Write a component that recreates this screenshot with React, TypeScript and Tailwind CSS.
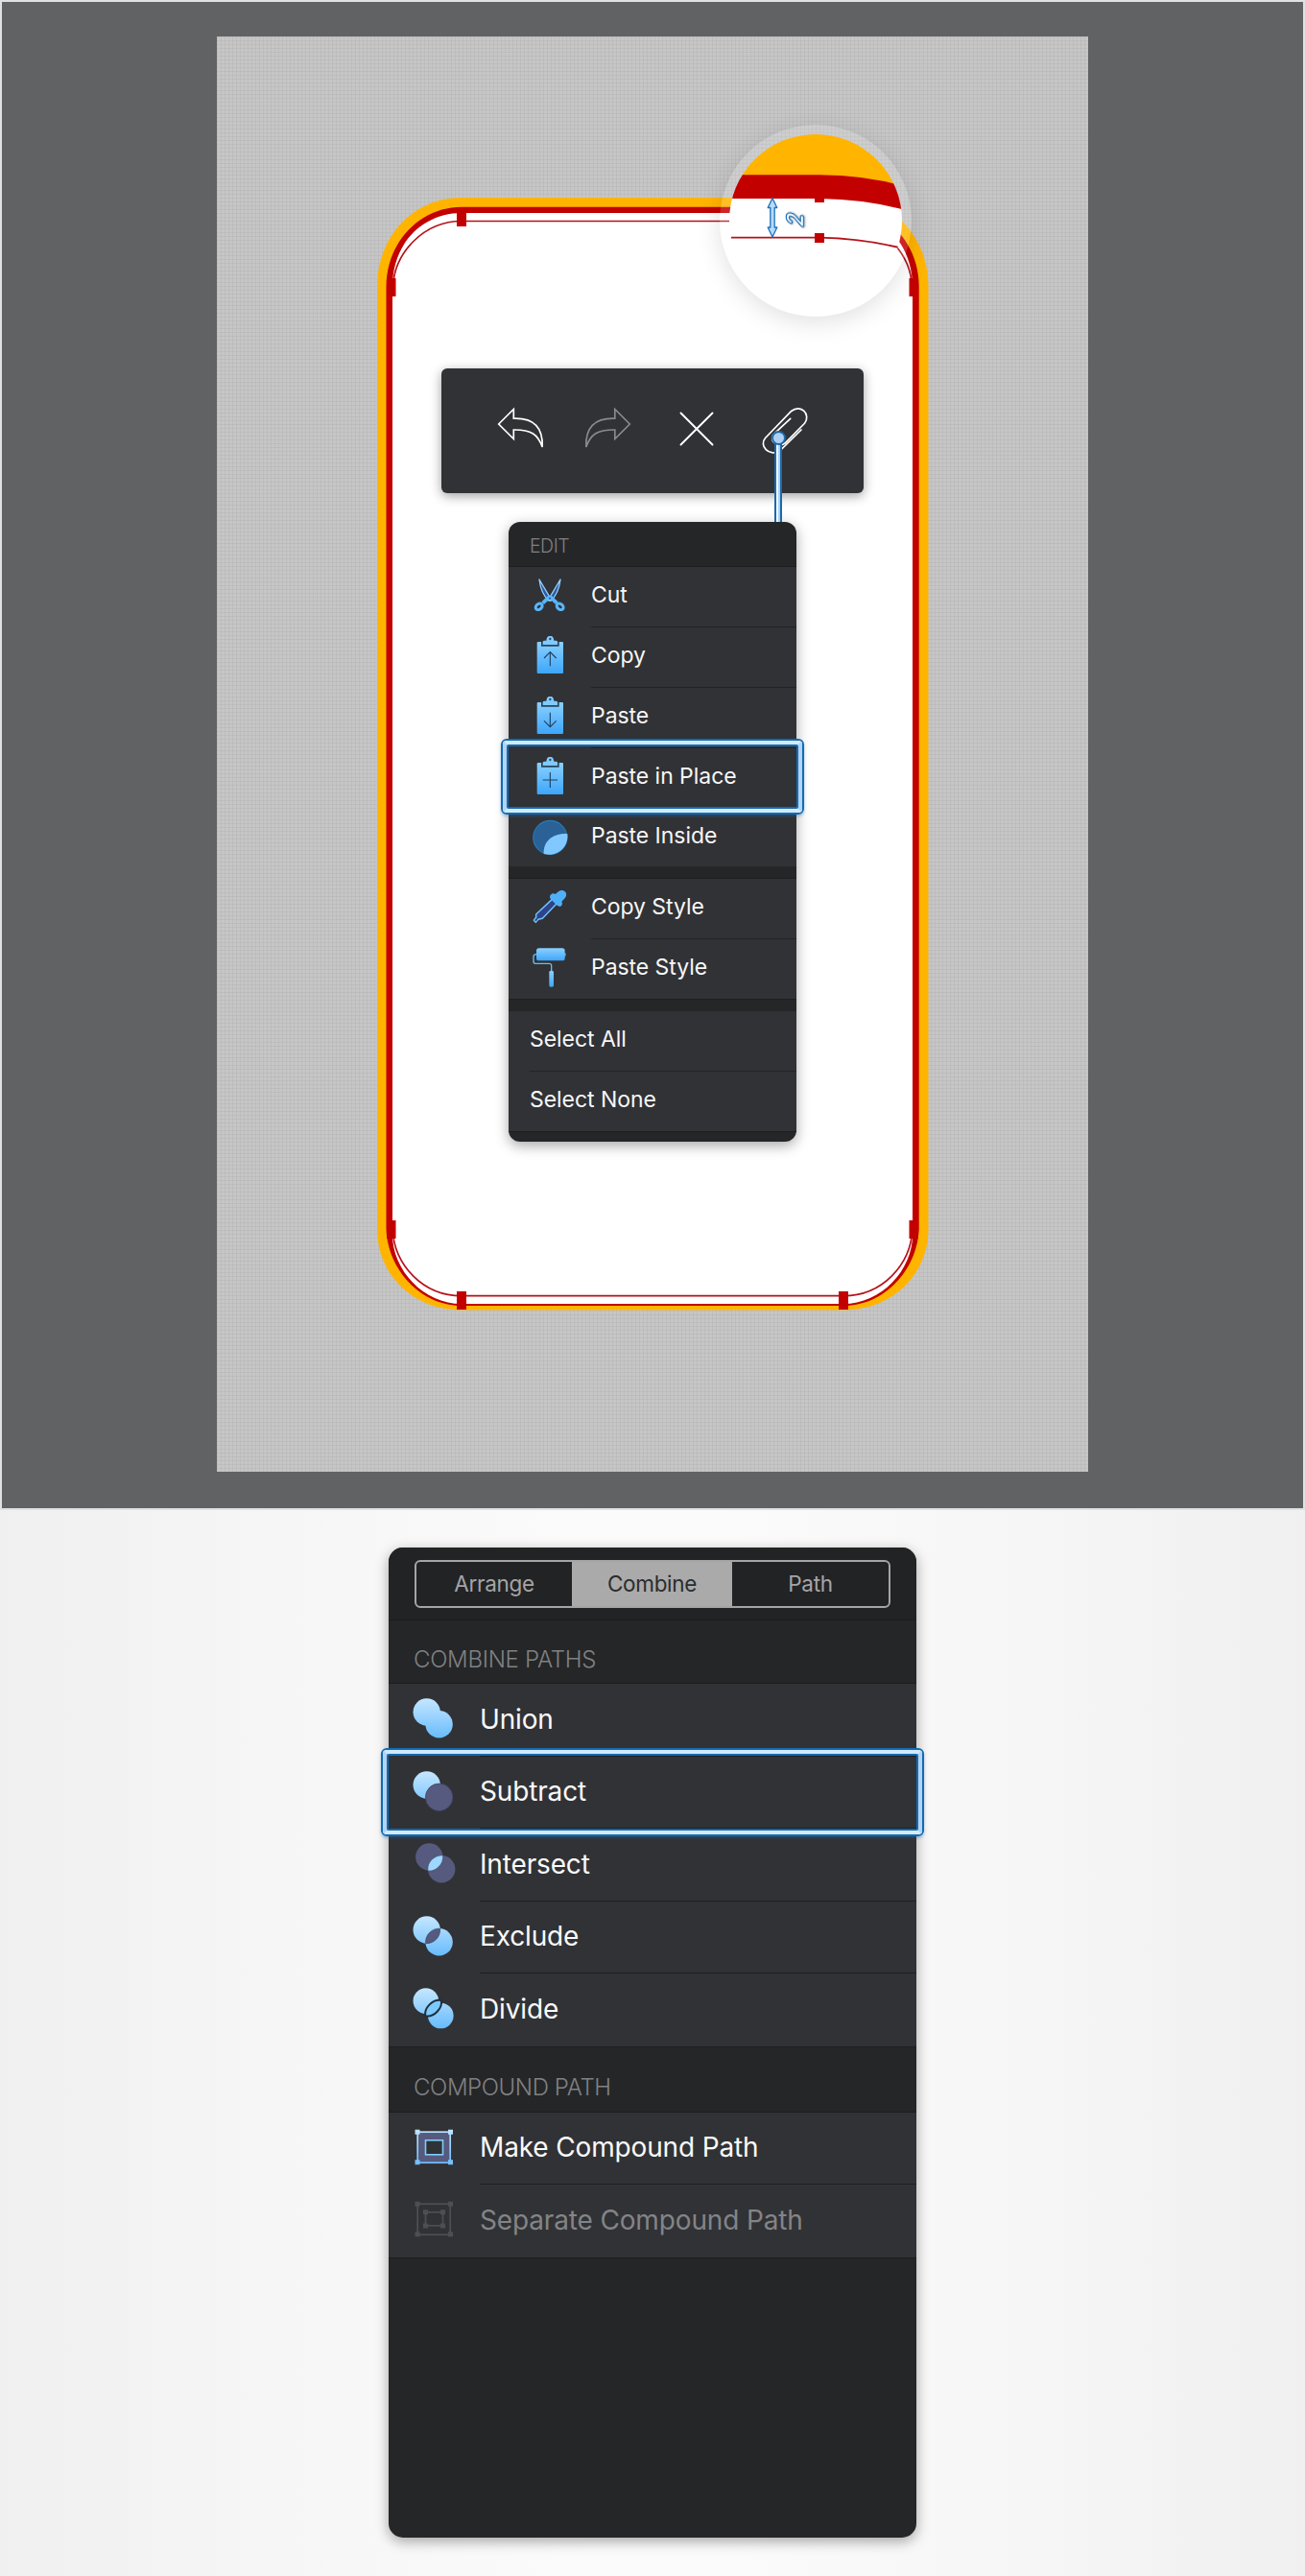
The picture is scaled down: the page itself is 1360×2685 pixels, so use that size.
import type { ReactNode } from "react";

function Defs() {
  return (
    <svg className="absolute size-0" aria-hidden="true">
      <defs>
        <linearGradient id="sky" x1="0" y1="0" x2="0" y2="1">
          <stop offset="0" stopColor="#8bd0ff" />
          <stop offset="1" stopColor="#3da6fb" />
        </linearGradient>
        <linearGradient id="pale" gradientUnits="userSpaceOnUse" x1="0" y1="0" x2="0" y2="42">
          <stop offset="0" stopColor="#c6e7ff" />
          <stop offset="1" stopColor="#67bbfd" />
        </linearGradient>
      </defs>
    </svg>
  );
}

/* Phone outline on the artboard, drawn in artboard pixels. */
function PhoneDrawing() {
  const nodes = [
    [476, 217, 10, 19],
    [403, 290, 9.5, 19],
    [947.5, 290, 9.5, 19],
    [403, 1272, 9.5, 19],
    [947.5, 1272, 9.5, 19],
    [476, 1346, 10, 19],
    [874, 1346, 10, 19],
  ];
  return (
    <svg className="absolute inset-0" width="907" height="1496" viewBox="226 38 907 1496">
      <path
        d="M481 206H879C930 206 967.5 247 967.5 299V1281C967.5 1328 930 1365.5 879 1365.5H481C430 1365.5 393 1328 393 1281V299C393 247 430 206 481 206Z"
        fill="#ffb400"
      />
      <path
        d="M481 215.7H879C922 215.7 957.7 252 957.7 299V1281C956 1323 922 1361 879 1361H481C438 1361 404 1323 402.5 1281V299C402.5 252 438 215.7 481 215.7Z"
        fill="#c30000"
      />
      <path
        d="M481 222H879C918 222 951 252 951 299V1281C954 1321 920 1359 879 1359H481C440 1359 406 1321 409 1281V299C409 252 442 222 481 222Z"
        fill="#fff"
      />
      <path
        d="M481 230.5H879C918 230.5 949 263 950.5 299M409.5 299C411 263 442 230.5 481 230.5"
        fill="none"
        stroke="#b5121b"
        strokeWidth="1.7"
      />
      <path
        d="M409 1281C411 1319 441 1350.7 481 1350.7H879C919 1350.7 949 1319 951 1281"
        fill="none"
        stroke="#b5121b"
        strokeWidth="1.7"
      />
      {nodes.map(([x, y, w, h]) => (
        <rect key={`${x}-${y}`} x={x} y={y} width={w} height={h} fill="#c30000" />
      ))}
    </svg>
  );
}

function Magnifier() {
  return (
    <div className="absolute left-[524px] top-[92px] size-[200px] rounded-full bg-white/15 p-[10px] shadow-[0_6px_26px_rgba(0,0,0,0.12)]">
      <svg className="rounded-full" width="180" height="180" viewBox="760 140 180 180">
        <path d="M760 230V206H854Q900 207 940 217V320H760Z" fill="#fff" />
        <path d="M760 140H940V194Q900 183.5 854 183.3H760Z" fill="#ffb400" />
        <path d="M760 182.3H854Q900 182.5 940 193.5V218Q900 207.5 854 207H760Z" fill="#c30000" />
        <rect x="849" y="197" width="10" height="14" fill="#c30000" />
        <path d="M762 247.7H854Q897 248.5 937 258L942 264" fill="none" stroke="#b5121b" strokeWidth="1.8" />
        <rect x="849" y="243" width="10" height="10" fill="#c30000" />
        <path
          d="M805 206.5L809.8 216.5H807.2V237H809.8L805 247L800.2 237H802.8V216.5H800.2Z"
          fill="#b7dafb"
          stroke="#1d72b8"
          strokeWidth="1.3"
          strokeLinejoin="round"
        />
        <text
          transform="translate(836.8 236.5) rotate(-90) skewX(-8)"
          fontFamily="Lato, sans-serif"
          fontStyle="italic"
          fontSize="23"
          fill="#fff"
          stroke="#1a6fb5"
          strokeWidth="2.6"
          strokeLinejoin="round"
          paintOrder="stroke"
          className="drop-shadow-[0_1px_1px_rgba(0,0,0,0.3)]"
        >
          2
        </text>
      </svg>
    </div>
  );
}

function Toolbar() {
  return (
    <div className="relative flex h-[130px] w-[440px] items-center rounded-[6px] bg-[#313236] pl-[57px] shadow-[0_3px_12px_rgba(0,0,0,0.38)]">
      <div className="flex items-center">
        <svg width="52" height="50" viewBox="517 424 52 50" fill="none" stroke="#fff" strokeWidth="1.7">
          <path d="M519.7 442L535.3 426.5V436.2C557 435.5 566 446 565.2 466C560.5 453 554 447.8 535.3 448V457.5Z" />
        </svg>
        <svg className="ml-[38px]" width="52" height="50" viewBox="607 424 52 50" fill="none" stroke="#8a8a8e" strokeWidth="1.7">
          <path d="M656.3 442L640.8 426.5V436.2C619 435.5 610 446 610.8 466C615.5 453 622 447.8 640.8 448V457.5Z" />
        </svg>
        <svg className="ml-[47px]" width="40" height="50" viewBox="706 424 40 50" fill="none" stroke="#fff" strokeWidth="1.9" strokeLinecap="round">
          <path d="M709.5 430.5L742.5 463.5M742.5 430.5L709.5 463.5" />
        </svg>
        <svg className="ml-[46px]" width="52" height="50" viewBox="792 424 52 50" fill="none" stroke="#fff" strokeWidth="1.7" strokeLinecap="round">
          <path d="M835 448L812.3 470.3C801.5 476 790.5 464.5 797.6 456.5L824.7 428.5C834.5 420.5 845.5 432 838.5 441.3L818 462C810 468 800 458 807 451.8L823.7 436.3" />
        </svg>
      </div>
      <div className="absolute left-[347px] top-[73px] z-10 h-[87px] w-[8px] border-x-2 border-[#1b69a8] bg-[linear-gradient(90deg,#effaff_50%,#a9d0f8_50%)]" />
      <div className="absolute left-[344px] top-[65px] z-10 size-[15px] rounded-full border-2 border-[#1b69a8] bg-[#afd0f5]" />
    </div>
  );
}

function Highlight({ className }: { className: string }) {
  return (
    <div className={`pointer-events-none absolute z-10 rounded-[6px] border-2 border-[#126bb0] shadow-[0_2px_3px_rgba(30,110,180,0.35)] ${className}`}>
      <div className="h-full rounded-[4px] border-4 border-x-[#b3d3f7] border-b-[#d4eafb] border-t-[#d0e9fd]">
        <div className="h-full rounded-[2px] border-2 border-[#126bb0]" />
      </div>
    </div>
  );
}

function MenuIcon({ children }: { children: ReactNode }) {
  return (
    <svg className="shrink-0 overflow-visible" width="40" height="42" viewBox="0 0 120 126">
      {children}
    </svg>
  );
}

function ScissorsIcon() {
  return (
    <MenuIcon>
      <path d="M27 9L62 68L57 76C42 62 30 35 27 9Z" fill="#31589c" stroke="#8fd0ff" strokeWidth="4" strokeLinejoin="round" />
      <path d="M93 9L58 68L63 76C78 62 90 35 93 9Z" fill="#31589c" stroke="#8fd0ff" strokeWidth="4" strokeLinejoin="round" />
      <path d="M60 62L38 83M60 62L82 83" stroke="#59b6fd" strokeWidth="11" />
      <ellipse cx="26" cy="94" rx="11.5" ry="8.5" transform="rotate(-40 26 94)" fill="none" stroke="#59b6fd" strokeWidth="9" />
      <ellipse cx="92" cy="94" rx="11.5" ry="8.5" transform="rotate(40 92 94)" fill="none" stroke="#59b6fd" strokeWidth="9" />
      <circle cx="60" cy="68" r="3" fill="#294f7b" />
    </MenuIcon>
  );
}

function ClipboardIcon({ glyph }: { glyph: string }) {
  return (
    <MenuIcon>
      <rect x="20" y="15" width="82" height="99" rx="3" fill="url(#sky)" />
      <path d="M33 15V29H89V15H75V11H47V15Z" fill="#27465f" />
      <path d="M38 24V15Q38 11 43 11H49C51 2 51 -3 61 -3C71 -3 71 2 73 11H79Q84 11 84 15V24Z" fill="#7fcaff" />
      <circle cx="61" cy="6" r="3.5" fill="#27465f" />
      <path d={glyph} fill="none" stroke="#1f4260" strokeWidth="3.4" />
    </MenuIcon>
  );
}

function PasteInsideIcon() {
  return (
    <MenuIcon>
      <circle cx="61" cy="63" r="52.5" fill="#2a6196" stroke="#2677b5" strokeWidth="4" />
      <path d="M115 51C66 48 38 78 41 114C83 126 120 92 115 51Z" fill="#80c8ff" />
    </MenuIcon>
  );
}

function EyedropperIcon() {
  return (
    <MenuIcon>
      <path d="M67 34L81 48L37 94L24 97L16 106L10 100L17 91V81Z" fill="#2e4389" stroke="#70c0fb" strokeWidth="4.5" strokeLinejoin="round" />
      <path d="M77 18L88 9C98 1 115 9 111 23C109 30 101 36 97 41C103 51 93 61 84 54L61 31C57 21 69 11 77 18Z" fill="#4fb0fa" />
      <circle cx="17" cy="98" r="3" fill="#27465f" />
    </MenuIcon>
  );
}

function RollerIcon() {
  return (
    <MenuIcon>
      <path d="M18 17Q9 17 9 25V40Q9 46 15 46H58Q65 46 65 52V70" fill="none" stroke="#6abcf6" strokeWidth="4" />
      <rect x="104" y="13" width="6" height="10" rx="2" fill="#4dacf6" />
      <rect x="18" y="-2" width="89" height="39" rx="8" fill="url(#sky)" />
      <rect x="58" y="68" width="14" height="51" rx="5" fill="url(#sky)" />
    </MenuIcon>
  );
}

const UP = "M61 91V47M42 66L61 47L80 66";
const DOWN = "M61 47V91M42 73L61 92L80 73";
const PLUS = "M61 45V93M38 69H84";

type Item = { label: string; icon?: ReactNode };

function MenuRow({ item, last, highlighted, height = "h-[63px]" }: { item: Item; last?: boolean; highlighted?: boolean; height?: string }) {
  return (
    <div className={`relative flex items-stretch ${height}`}>
      {item.icon && <div className="flex w-[86px] shrink-0 items-center pb-px pl-[23px]">{item.icon}</div>}
      <div
        className={`flex flex-1 items-center pb-[3px] text-[23px] tracking-[-0.05px] text-[#f7f7f8] ${item.icon ? "" : "ml-[22px]"} ${last ? "" : "border-b border-[#222326]"}`}
      >
        {item.label}
      </div>
      {highlighted && <Highlight className="-left-[8px] -right-[8px] -top-[10px] h-[79px]" />}
    </div>
  );
}

function EditMenu() {
  const edit: Item[] = [
    { label: "Cut", icon: <ScissorsIcon /> },
    { label: "Copy", icon: <ClipboardIcon glyph={UP} /> },
    { label: "Paste", icon: <ClipboardIcon glyph={DOWN} /> },
    { label: "Paste in Place", icon: <ClipboardIcon glyph={PLUS} /> },
    { label: "Paste Inside", icon: <PasteInsideIcon /> },
  ];
  return (
    <div className="relative mt-[30px] flex h-[646px] w-[300px] flex-col rounded-[12px] bg-[#252628] shadow-[0_4px_14px_rgba(0,0,0,0.35)]">
      <div className="flex h-[46px] items-center pl-[22px] pt-[5px] text-[19.5px] font-light tracking-[-0.5px] text-[#808183]">EDIT</div>
      <div className="border-t border-[#1e1f21] bg-[#313235]">
        {edit.map((item, i) => (
          <MenuRow key={item.label} item={item} last={i === 4} highlighted={i === 3} height={i === 4 ? "h-[60px]" : "h-[63px]"} />
        ))}
      </div>
      <div className="mt-[12px] border-y border-[#1e1f21] bg-[#313235]">
        <MenuRow item={{ label: "Copy Style", icon: <EyedropperIcon /> }} />
        <MenuRow item={{ label: "Paste Style", icon: <RollerIcon /> }} last height="h-[62px]" />
      </div>
      <div className="mt-[12px] border-b border-[#1e1f21] bg-[#313235]">
        <MenuRow item={{ label: "Select All" }} />
        <MenuRow item={{ label: "Select None" }} last height="h-[62px]" />
      </div>
    </div>
  );
}

const CIRCLE_A = <circle cx="14.7" cy="14.5" r="14.2" />;
const CIRCLE_B = <circle cx="27.6" cy="27.3" r="14.2" />;
const LENS = "M28.6 13.2A14.2 14.2 0 0 1 13.6 28.6A14.2 14.2 0 0 1 28.6 13.2Z";

function ShapeIcon({ children }: { children: ReactNode }) {
  return (
    <svg className="shrink-0 overflow-visible" width="42" height="42" viewBox="0 0 42 42">
      {children}
    </svg>
  );
}

function UnionIcon() {
  return <ShapeIcon><g fill="url(#pale)">{CIRCLE_A}{CIRCLE_B}</g></ShapeIcon>;
}

function SubtractIcon() {
  return <ShapeIcon><g fill="url(#pale)">{CIRCLE_A}</g><g fill="#565a7e" stroke="#424566" strokeWidth="0.8">{CIRCLE_B}</g></ShapeIcon>;
}

function IntersectIcon() {
  return (
    <ShapeIcon>
      <g transform="translate(2.6 0)">
        <g fill="#565a7e">{CIRCLE_A}{CIRCLE_B}</g>
        <path d={LENS} fill="#9cd8ff" />
      </g>
    </ShapeIcon>
  );
}

function ExcludeIcon() {
  return (
    <ShapeIcon>
      <g fill="url(#pale)">{CIRCLE_A}{CIRCLE_B}</g>
      <path d={LENS} fill="#565a7e" stroke="#334766" strokeWidth="0.7" />
    </ShapeIcon>
  );
}

function DivideIcon() {
  return (
    <ShapeIcon>
      <g fill="url(#pale)">
        <circle cx="13.8" cy="13.6" r="13.3" />
        <circle cx="29.3" cy="29" r="13.3" />
      </g>
      <path d="M29.8 13C31.5 21 22.5 31 13.3 29.4C11.6 21 21 11.3 29.8 13Z" fill="#7cc9fc" stroke="#1c303f" strokeWidth="2" />
    </ShapeIcon>
  );
}

function CompoundIcon() {
  return (
    <ShapeIcon>
      <rect x="5.2" y="5.2" width="34" height="32" fill="#565a7e" stroke="url(#pale)" strokeWidth="1.7" />
      <rect x="13.5" y="13.8" width="18" height="15" fill="#2f3236" stroke="#7fcdfa" strokeWidth="1.6" />
      <path d="M2.5 2.7h5v5h-5zM37 2.7h5v5h-5zM2.5 34.2h5v5h-5zM37 34.2h5v5h-5z" fill="url(#pale)" />
    </ShapeIcon>
  );
}

function SeparateIcon() {
  return (
    <ShapeIcon>
      <g fill="none" stroke="#4e4f53" strokeWidth="1.7">
        <rect x="5.2" y="5.2" width="34" height="32" />
        <rect x="13.5" y="13.8" width="18" height="14" />
      </g>
      <path
        d="M2.5 2.7h5v5h-5zM37 2.7h5v5h-5zM2.5 34.2h5v5h-5zM37 34.2h5v5h-5zM11 11.3h5v5h-5zM29 11.3h5v5h-5zM11 25.5h5v5h-5zM29 25.5h5v5h-5z"
        fill="#4e4f53"
      />
    </ShapeIcon>
  );
}

function PanelRow({ label, icon, last, muted, highlighted }: { label: string; icon: ReactNode; last?: boolean; muted?: boolean; highlighted?: boolean }) {
  return (
    <div className="relative flex h-[75.5px]">
      <div className="flex w-[95px] shrink-0 items-center pb-[3px] pl-[25px]">{icon}</div>
      <div className={`flex flex-1 items-center pb-px text-[28px] tracking-[-0.15px] ${muted ? "text-[#838487]" : "text-[#fafafa]"} ${last ? "" : "border-b border-[#1e1f22]"}`}>
        {label}
      </div>
      {highlighted && <Highlight className="-left-[8px] -right-[8px] -top-[9px] h-[92px]" />}
    </div>
  );
}

function CombinePanel() {
  return (
    <div className="flex h-[1032px] w-[550px] flex-col rounded-[15px] bg-[#252628] shadow-[0_4px_14px_rgba(0,0,0,0.35)]">
      <div className="h-[76px] rounded-t-[15px] border-b border-[#1c1d1f] bg-[#222325] px-[27px] pt-[13px]">
        <div className="grid h-[50px] grid-cols-[162px_167px_1fr] overflow-hidden rounded-[6px] border-2 border-[#a5a5a6] text-[22.5px] tracking-[-0.3px] text-[#a5a5a6]">
          <div className="flex items-center justify-center">Arrange</div>
          <div className="flex items-center justify-center bg-[#aaaaaa] text-[#2b2c2e]">Combine</div>
          <div className="flex items-center justify-center">Path</div>
        </div>
      </div>
      <div className="flex h-[65px] items-center pl-[26px] pt-[17px] text-[24px] font-light tracking-[-0.3px] text-[#808183]">COMBINE PATHS</div>
      <div className="border-y border-[#1c1d1f] bg-[#313235]">
        <PanelRow label="Union" icon={<UnionIcon />} />
        <PanelRow label="Subtract" icon={<SubtractIcon />} highlighted />
        <PanelRow label="Intersect" icon={<IntersectIcon />} />
        <PanelRow label="Exclude" icon={<ExcludeIcon />} />
        <PanelRow label="Divide" icon={<DivideIcon />} last />
      </div>
      <div className="flex h-[67px] items-center pl-[26px] pt-[18px] text-[24px] font-light tracking-[-0.4px] text-[#808183]">COMPOUND PATH</div>
      <div className="border-y border-[#1c1d1f] bg-[#313235]">
        <PanelRow label="Make Compound Path" icon={<CompoundIcon />} />
        <PanelRow label="Separate Compound Path" icon={<SeparateIcon />} last muted />
      </div>
    </div>
  );
}

export default function App() {
  return (
    <main className="flex h-[2685px] w-[1360px] flex-col overflow-hidden bg-[linear-gradient(90deg,#f0f0f0,#f7f7f7_25%,#fbfbfb_45%,#fbfbfb_55%,#f7f7f7_75%,#f0f0f0)] font-[Inter,sans-serif]">
      <Defs />
      <section className="h-[1574px] shrink-0 border-2 border-[#dfe2e2] bg-[#616264] pl-[224px] pt-[36px]">
        <div className="relative flex h-[1496px] w-[908px] flex-col items-center bg-[#c6c6c6] bg-[linear-gradient(90deg,rgba(0,0,0,0.04)_1px,transparent_1px),linear-gradient(rgba(0,0,0,0.04)_1px,transparent_1px)] bg-[size:4px_4px] pt-[346px]">
          <PhoneDrawing />
          <Magnifier />
          <Toolbar />
          <EditMenu />
        </div>
      </section>
      <section className="flex flex-1 justify-center pt-[39px]">
        <CombinePanel />
      </section>
    </main>
  );
}
